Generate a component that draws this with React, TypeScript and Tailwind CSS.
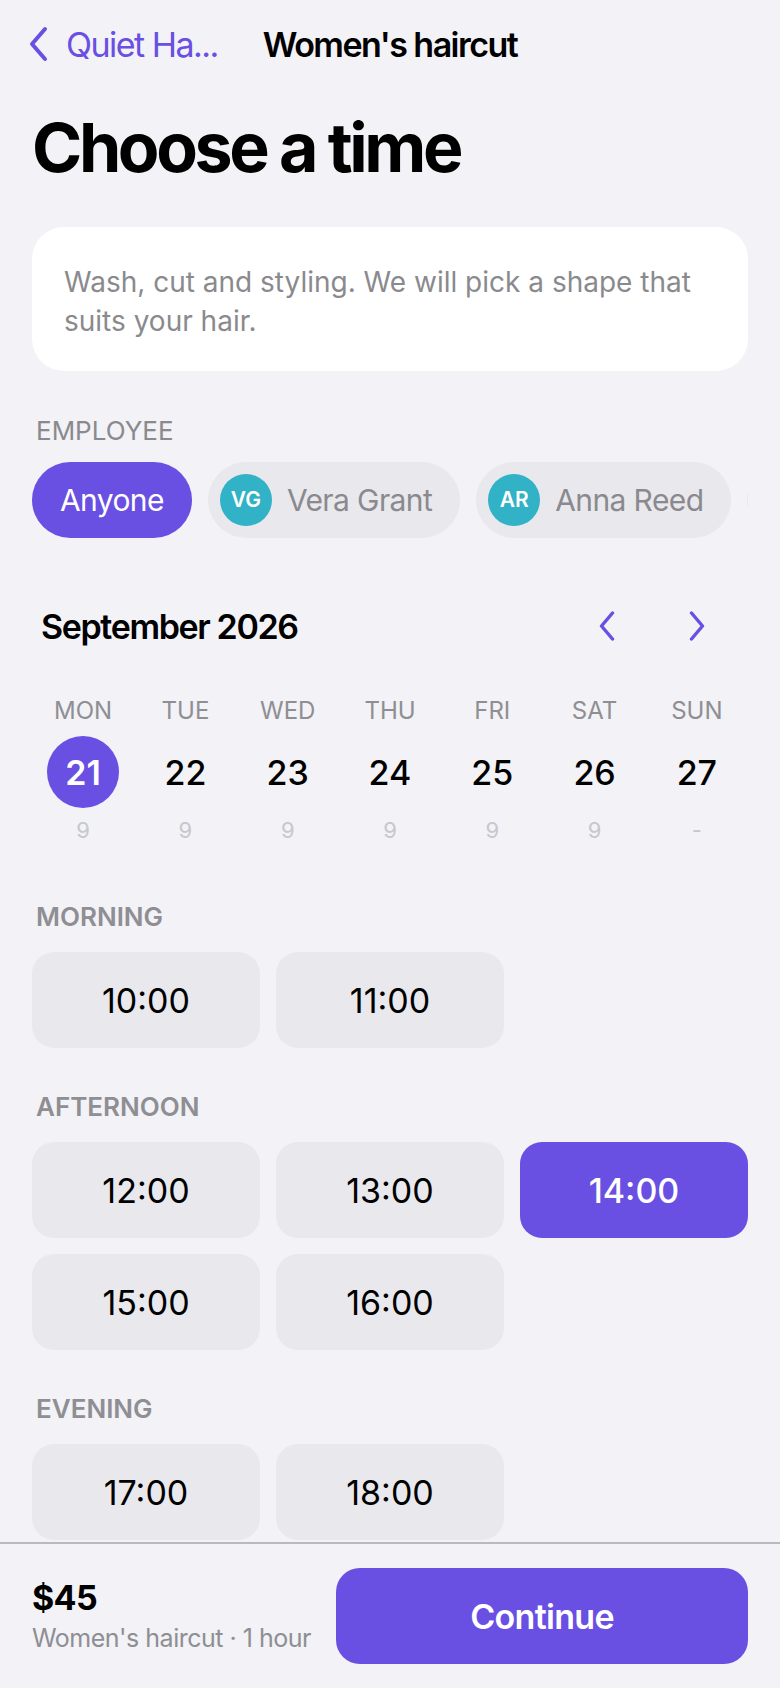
const employees = [
  { id: "vg", initials: "VG", name: "Vera Grant" },
  { id: "ar", initials: "AR", name: "Anna Reed" },
];

const days = [
  { label: "MON", day: 21, slots: "9", selected: true },
  { label: "TUE", day: 22, slots: "9" },
  { label: "WED", day: 23, slots: "9" },
  { label: "THU", day: 24, slots: "9" },
  { label: "FRI", day: 25, slots: "9" },
  { label: "SAT", day: 26, slots: "9" },
  { label: "SUN", day: 27, slots: "-" },
];

const sections = [
  { title: "MORNING", times: ["10:00", "11:00"] },
  { title: "AFTERNOON", times: ["12:00", "13:00", "14:00", "15:00", "16:00"] },
  { title: "EVENING", times: ["17:00", "18:00"] },
];

const selectedTime = "14:00";

function Chevron({ dir, className }: { dir: "left" | "right"; className: string }) {
  return (
    <svg viewBox="0 0 18 30" className={className} fill="none" stroke="currentColor" strokeWidth={3.4} strokeLinecap="round" strokeLinejoin="round">
      <polyline points={dir === "left" ? "14.5,2 3.5,15 14.5,28" : "3.5,2 14.5,15 3.5,28"} />
    </svg>
  );
}

export default function App() {
  return (
    <div className="w-[780px] h-[1688px] bg-[#f2f2f7] flex flex-col overflow-hidden font-['Inter',sans-serif] text-black">
      <div className="flex-1 overflow-hidden px-[32px]">
        {/* Nav bar */}
        <div className="relative h-[88px] flex items-center">
          <div className="flex items-center gap-[17px] text-[#6a4fe3]">
            <svg viewBox="0 0 22 36" className="w-[22px] h-[36px] -ml-[5px]" fill="none" stroke="currentColor" strokeWidth={4} strokeLinecap="round" strokeLinejoin="round">
              <polyline points="18,3 5,18 18,33" />
            </svg>
            <span className="text-[34px] tracking-[-0.045em]">Quiet Ha...</span>
          </div>
          <div className="absolute inset-x-0 text-center text-[34px] font-semibold tracking-[-0.045em]">
            Women's haircut
          </div>
        </div>

        <h1 className="mt-[18px] text-[68px] leading-[82px] font-bold tracking-[-0.05em]">Choose a time</h1>

        {/* Description */}
        <div className="mt-[39px] bg-white rounded-[32px] px-[32px] pt-[36px] pb-[30px]">
          <p className="text-[28px] leading-[39px] text-[#8a8a8e]">
            Wash, cut and styling. We will pick a shape that suits your hair.
          </p>
        </div>

        {/* Employee */}
        <div className="mt-[44px] text-[26px] leading-[32px] text-[#8a8a8e] pl-[4px]">EMPLOYEE</div>
        <div className="mt-[15px] flex gap-[16px] overflow-hidden">
          <div className="shrink-0 h-[76px] px-[28px] rounded-full bg-[#6a4fe3] text-white text-[30px] flex items-center tracking-[-0.02em]">
            Anyone
          </div>
          {employees.map((e) => (
            <div
              key={e.id}
              className="shrink-0 h-[76px] pl-[12px] pr-[28px] rounded-full bg-[#e8e8ed] flex items-center gap-[15px]"
            >
              <div className="w-[52px] h-[52px] rounded-full bg-[#31b2c6] text-white text-[21px] font-semibold flex items-center justify-center">
                {e.initials}
              </div>
              <span className="text-[30px] text-[#8a8a8e] tracking-[-0.02em]">{e.name}</span>
            </div>
          ))}
          <div className="shrink-0 w-[230px] h-[76px] rounded-full bg-[#e8e8ed]" />
        </div>

        {/* Calendar */}
        <div className="mt-[58px] h-[60px] flex items-center justify-between pl-[9px]">
          <span className="text-[34px] font-semibold tracking-[-0.04em]">September 2026</span>
          <div className="flex items-center gap-[72px] pr-[42px] text-[#6a4fe3]">
            <Chevron dir="left" className="w-[18px] h-[30px]" />
            <Chevron dir="right" className="w-[18px] h-[30px]" />
          </div>
        </div>

        <div className="mt-[40px] grid grid-cols-7">
          {days.map((d) => (
            <div key={d.label} className="flex flex-col items-center">
              <span className="text-[24px] leading-[30px] text-[#8e8e93]">{d.label}</span>
              <div
                className={
                  d.selected
                    ? "mt-[10px] w-[72px] h-[72px] rounded-full bg-[#6a4fe3] text-white font-semibold text-[34px] flex items-center justify-center"
                    : "mt-[10px] w-[72px] h-[72px] rounded-full text-black font-medium text-[34px] flex items-center justify-center"
                }
              >
                {d.day}
              </div>
              <span className="mt-[9px] text-[22px] leading-[26px] text-[#c7c7cc]">{d.slots}</span>
            </div>
          ))}
        </div>

        {/* Time slots */}
        <div className="mt-[15px] flex flex-col gap-[43px] pt-[43px]">
          {sections.map((s) => (
            <div key={s.title}>
              <div className="text-[26px] leading-[32px] font-semibold text-[#8e8e93] pl-[4px]">{s.title}</div>
              <div className="mt-[19px] grid grid-cols-3 gap-[16px]">
                {s.times.map((t) => (
                  <div
                    key={t}
                    className={
                      t === selectedTime
                        ? "h-[96px] rounded-[22px] bg-[#6a4fe3] text-white font-medium text-[34px] flex items-center justify-center"
                        : "h-[96px] rounded-[22px] bg-[#e8e8ed] text-black text-[34px] flex items-center justify-center"
                    }
                  >
                    {t}
                  </div>
                ))}
              </div>
            </div>
          ))}
        </div>
      </div>

      {/* Footer */}
      <div className="shrink-0 h-[146px] border-t-2 border-[#b9b9be] bg-[#f2f2f7] px-[32px] flex items-center justify-between">
        <div className="flex flex-col">
          <span className="text-[34px] leading-[40px] font-bold tracking-[-0.02em]">$45</span>
          <span className="mt-[4px] text-[25px] leading-[32px] text-[#8e8e93] tracking-[-0.02em]">
            Women's haircut · 1 hour
          </span>
        </div>
        <button className="w-[412px] h-[96px] rounded-[24px] bg-[#6a4fe3] text-white text-[34px] font-semibold tracking-[-0.02em]">
          Continue
        </button>
      </div>
    </div>
  );
}
